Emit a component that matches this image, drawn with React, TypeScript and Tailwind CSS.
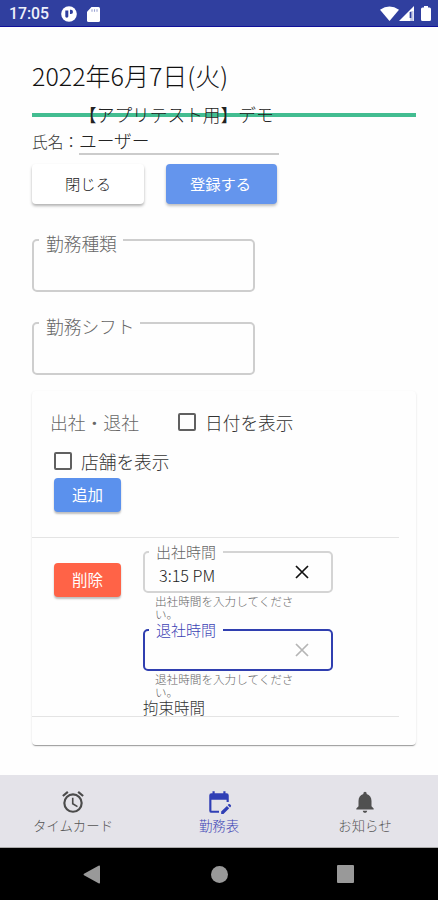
import type { ReactNode } from "react";

function OutlinedField({ label, legendClass, textClass, className, children }: {
  label: string; legendClass: string; textClass: string; className: string; children?: ReactNode;
}) {
  return (
    <fieldset className={className}>
      <legend className={legendClass}>
        <span className={textClass}>{label}</span>
      </legend>
      {children}
    </fieldset>
  );
}

function CloseIcon({ className }: { className: string }) {
  return (
    <svg width="14" height="14" viewBox="0 0 14 14" className={className} fill="none" stroke="currentColor" strokeWidth="1.7">
      <path d="M1 1l12 12M13 1L1 13" />
    </svg>
  );
}

function Checkbox({ label }: { label: string }) {
  return (
    <label className="flex items-center gap-[9px] text-[17.7px] leading-[24px] text-[#333]">
      <span className="h-[18px] w-[18px] shrink-0 rounded-[2px] border-2 border-[#606060]" />
      <span className="whitespace-nowrap">{label}</span>
    </label>
  );
}

function StatusBar() {
  return (
    <header className="flex h-[27px] shrink-0 items-center border-b border-[#10109a] bg-[#303f9f] pl-[9px] pr-[7px] text-white">
      <span className="w-[40px] pt-[2px] font-['Roboto',sans-serif] text-[15.8px] font-medium leading-[20px] text-[#eef0fa]">17:05</span>
      <svg width="16" height="16" viewBox="0 0 16 16" className="ml-[12px] mt-[2px]">
        <circle cx="8" cy="8" r="7.8" fill="#fff" />
        <path d="M4.300 4.500v5.500c0 1.100.6 1.700 1.500 1.700s1.500-.6 1.500-1.700V4.500z" fill="#303f9f" />
        <path d="M9 3.800h.9a2.100 2.100 0 0 1 0 4.200H9z" fill="#303f9f" />
      </svg>
      <svg width="13" height="15" viewBox="0 0 13 15" className="ml-[10px] mt-[2px]">
        <path d="M4.500 0H11.500Q13 0 13 1.500v12Q13 15 11.500 15h-10Q0 15 0 13.500V4.800z" fill="#fff" />
        <path d="M5 2.200v2.500M7.500 2.200v2.500M10 2.200v2.500" stroke="#9aa2d2" strokeWidth="1.100" />
      </svg>
      <span className="flex-1" />
      <svg width="19" height="15" viewBox="0 0 19 15" className="mt-[1px]">
        <path d="M0 3.800Q9.500-3 19 3.800L9.500 15z" fill="#fff" />
      </svg>
      <svg width="15" height="15" viewBox="0 0 15 15" className="mt-[1px]">
        <path d="M0 15L15 0v15z" fill="#fff" />
        <path d="M11.200 5h3.300v10h-3.300z" fill="#c3c8e6" />
        <path d="M11.500 6v6" stroke="#303f9f" strokeWidth="1.700" />
      </svg>
      <svg width="10" height="15" viewBox="0 0 10 15" className="ml-[7px] mt-[1px]">
        <path d="M3 0h4v1.500h1.500Q10 1.500 10 3v10.500Q10 15 8.500 15h-7Q0 15 0 13.500V3Q0 1.500 1.500 1.500H3z" fill="#fff" />
      </svg>
    </header>
  );
}

const timeField = "h-[46px] w-[190px] rounded-[5px] pl-[4px]";
const timeLegend = "h-[10px] px-[7px] text-[15px] leading-[10px]";
const helperText = "h-[26px] w-[160px] pl-[12px] text-[11.6px] leading-[13px] text-[#666]";

export default function App() {
  return (
    <div className="flex h-[900px] w-[438px] flex-col overflow-hidden bg-white font-['Noto_Sans_CJK_JP',sans-serif] font-light text-[#111]">
      <StatusBar />
      <main className="flex h-[748px] shrink-0 flex-col bg-[#fefefe] pl-[32px] pr-[22px]">
        <h1 className="mt-[30px] h-[37px] text-[25px] leading-[36px]">2022年6月7日(火)</h1>
        <div className="mt-[19px] h-[4px] bg-[#43bd91]" />
        <div className="-mt-[16px] flex h-[54px] w-[247px]">
          <span className="mt-[29px] w-[47px] whitespace-nowrap text-[15.7px] leading-[24px] text-[#333]">氏名：</span>
          <div className="z-10 w-[200px] border-b-2 border-[#cbcbcb] text-[17.7px] leading-[26px] text-[#222]">
            <span className="block whitespace-nowrap">【アプリテスト用】デモ</span>
            <span className="block">ユーザー</span>
          </div>
        </div>
        <div className="mt-[9px] flex gap-[22px] text-[15.3px]">
          <button className="h-[40px] w-[112px] rounded-[4px] bg-white pb-[2px] text-[#222] shadow-[0_2px_3px_rgba(0,0,0,.3)]">閉じる</button>
          <button className="h-[40px] w-[111px] rounded-[4px] bg-[#6495ed] pb-[2px] pr-[2px] font-normal text-white shadow-[0_2px_3px_rgba(0,0,0,.25)]">登録する</button>
        </div>

        <OutlinedField
          label="勤務種類"
          className="mt-[31px] h-[57px] w-[223px] rounded-[5px] border-2 border-[#cecece] pl-[5px]"
          legendClass="h-[10px] pl-[7px] pr-[6px] text-[17.7px] leading-[10px] text-[#666]"
          textClass="block translate-y-[3px]"
        />
        <OutlinedField
          label="勤務シフト"
          className="mt-[26px] h-[57px] w-[223px] rounded-[5px] border-2 border-[#cecece] pl-[5px]"
          legendClass="h-[10px] pl-[7px] pr-[6px] text-[17.7px] leading-[10px] text-[#666]"
          textClass="block translate-y-[3px]"
        />

        <section className="mt-[16px] h-[354px] rounded-[4px] bg-[#fefefe] shadow-[0_2px_1px_-1px_rgba(0,0,0,.25),0_1px_1px_rgba(0,0,0,.14),0_1px_3px_rgba(0,0,0,.08)]">
          <div className="mr-[17px] flex h-[147px] flex-col border-b border-[#e4e4e4]">
            <div className="mt-[19px] flex h-[24px] items-center pl-[18px]">
              <span className="w-[128px] text-[17.8px] leading-[24px] text-[#666]">出社・退社</span>
              <Checkbox label="日付を表示" />
            </div>
            <div className="mt-[15px] flex h-[24px] items-center pl-[22px]">
              <Checkbox label="店舗を表示" />
            </div>
            <button className="ml-[22px] mt-[5px] h-[34px] w-[67px] rounded-[4px] bg-[#5b91ed] text-[15.5px] font-normal text-white shadow-[0_2px_2px_rgba(0,0,0,.25)]">追加</button>
          </div>
          <div className="mr-[17px] flex h-[179px] border-b border-[#e4e4e4]">
            <button className="ml-[22px] mt-[25px] h-[34px] w-[67px] rounded-[4px] bg-[#ff6347] text-[15.5px] font-normal text-white shadow-[0_2px_2px_rgba(0,0,0,.25)]">削除</button>
            <div className="ml-[22px] w-[190px]">
              <OutlinedField
                label="出社時間"
                className={`${timeField} mt-[9px] border-2 border-[#d4d4d4]`}
                legendClass={`${timeLegend} text-[#666]`}
                textClass="block"
              >
                <div className="flex h-[30px] items-center justify-between pl-[10px] pr-[22px]">
                  <span className="pt-[5px] text-[16.2px] leading-[24px] text-[#222]">3:15 PM</span>
                  <CloseIcon className="text-[#111]" />
                </div>
              </OutlinedField>
              <p className={`${helperText} mt-[2px]`}>
                出社時間を入力してくださ<br />い。
              </p>
              <OutlinedField
                label="退社時間"
                className={`${timeField} mt-[4px] border-2 border-[#303fb0]`}
                legendClass={`${timeLegend} text-[#3c43b5]`}
                textClass="block"
              >
                <div className="flex h-[30px] items-center justify-end pr-[22px]">
                  <CloseIcon className="text-[#b5b5b5]" />
                </div>
              </OutlinedField>
              <p className={`${helperText} mt-[2px]`}>
                退社時間を入力してくださ<br />い。
              </p>
              <div className="-mt-[1px] h-[18px] text-[15.5px] leading-[18px] text-[#333]">拘束時間</div>
            </div>
          </div>
        </section>
      </main>

      <nav className="grid h-[73px] shrink-0 grid-cols-3 border-b border-[#aaa] bg-[#e4e3e9] pt-[14px] text-[13.4px] leading-[18px] text-[#555]">
        <div className="flex flex-col items-center gap-[1px]">
          <svg width="26" height="26" viewBox="0 0 24 24" fill="#4b4b4b">
            <path d="M22 5.720l-4.600-3.860-1.290 1.530 4.600 3.860L22 5.720zM7.880 3.390L6.600 1.860 2 5.710l1.290 1.530 4.590-3.850zM12.500 8H11v6l4.750 2.850.75-1.230-4-2.370V8zM12 4a9 9 0 1 0 0 18 9 9 0 0 0 0-18zm0 16a7 7 0 1 1 0-14 7 7 0 0 1 0 14z" />
          </svg>
          <span>タイムカード</span>
        </div>
        <div className="flex flex-col items-center gap-[1px] text-[#3c43b5]">
          <svg width="26" height="26" viewBox="0 0 24 24" fill="#303fb5">
            <path d="M12 22H5a2 2 0 0 1-2-2V6a2 2 0 0 1 2-2h1V2h2v2h8V2h2v2h1a2 2 0 0 1 2 2v6h-2v-2H5v10h7v2zm10.130-5.010l.71-.71a1 1 0 0 0 0-1.410l-.71-.71a1 1 0 0 0-1.410 0l-.71.71 2.120 2.120zm-.71.71L16.120 23H14v-2.120l5.300-5.300 2.120 2.120z" />
          </svg>
          <span>勤務表</span>
        </div>
        <div className="flex flex-col items-center gap-[1px]">
          <svg width="26" height="26" viewBox="0 0 24 24" fill="#505050">
            <path d="M12 22c1.100 0 2-.9 2-2h-4c0 1.100.89 2 2 2zm6-6v-5c0-3.070-1.640-5.640-4.500-6.320V4a1.500 1.500 0 0 0-3 0v.68C7.630 5.360 6 7.920 6 11v5l-2 2v1h16v-1l-2-2z" />
          </svg>
          <span>お知らせ</span>
        </div>
      </nav>
      <footer className="flex h-[52px] shrink-0 items-center bg-black pl-[83px] pr-[84px] text-[#999]">
        <svg width="17" height="19" viewBox="0 0 17 19" fill="currentColor"><path d="M17 1.500v16Q17 19 15.500 18.200L1 10.200Q0 9.500 1 8.800L15.500.8Q17 0 17 1.500z" /></svg>
        <span className="ml-[111px] h-[17px] w-[17px] rounded-full bg-[#999]" />
        <span className="ml-[109px] h-[18px] w-[17px] rounded-[1px] bg-[#999]" />
      </footer>
    </div>
  );
}
